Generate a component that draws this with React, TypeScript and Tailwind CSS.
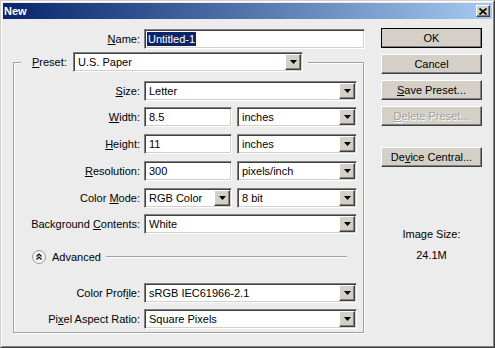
import React from "react";

const sunken =
  "bg-white border border-t-[#808080] border-l-[#808080] border-b-white border-r-white shadow-[inset_1px_1px_0_#404040,inset_-1px_-1px_0_#d4d0c8]";
const raised =
  "bg-[#d4d0c8] border border-t-white border-l-white border-b-[#404040] border-r-[#404040] shadow-[inset_-1px_-1px_0_#808080]";

type BoxProps = { value: React.ReactNode; className?: string };

const TextBox = ({ value, className = "" }: BoxProps) => (
  <div className={`${sunken} h-[20px] flex items-center pl-[4px] ${className}`}>{value}</div>
);

const Combo = ({ value, className = "" }: BoxProps) => (
  <div className={`${sunken} h-[20px] flex items-center pl-[4px] pr-[1px] ${className}`}>
    <span className="flex-1 whitespace-nowrap overflow-hidden">{value}</span>
    <div className={`${raised} w-[16px] h-[16px] flex items-center justify-center`}>
      <svg width="7" height="4" viewBox="0 0 7 4">
        <path d="M0 0h7L3.5 4z" fill="#000" />
      </svg>
    </div>
  </div>
);

type RowProps = { label: React.ReactNode; className?: string; children: React.ReactNode };

const Row = ({ label, className = "", children }: RowProps) => (
  <div className={`flex items-center h-[20px] ${className}`}>
    <div className="w-[126px] text-right whitespace-nowrap">{label}</div>
    <div className="ml-[4px] flex gap-[5px]">{children}</div>
  </div>
);

type BtnProps = { children: React.ReactNode; className?: string; isDefault?: boolean; disabled?: boolean };

const Btn = ({ children, className = "", isDefault, disabled }: BtnProps) => (
  <div
    className={`h-[20px] w-[101px] flex items-center justify-center ${
      isDefault ? "outline outline-1 outline-black -outline-offset-1" : ""
    } ${raised} ${disabled ? "text-[#a0a0a0] [text-shadow:1px_1px_0_#fff]" : ""} ${className}`}
  >
    {children}
  </div>
);

export default function App() {
  return (
    <div className="w-[495px] h-[348px] bg-[#ececec] font-['Liberation_Sans',Arial,sans-serif] text-[11px] leading-[13px] text-black border border-t-[#d4d0c8] border-l-[#d4d0c8] border-b-[#404040] border-r-[#404040]">
      <div className="h-full border border-t-white border-l-white border-b-[#808080] border-r-[#808080] p-[1px] flex flex-col">
        {/* title bar */}
        <div className="h-[16px] flex items-center justify-between bg-gradient-to-r from-[#0a246a] to-[#a6caf0] pl-[1px] pr-[2px]">
          <span className="text-white font-bold">New</span>
          <div className={`${raised} w-[14px] h-[12px] flex items-center justify-center`}>
            <svg width="8" height="7" viewBox="0 0 8 7">
              <path d="M0.5 0.5L7.5 6.5M7.5 0.5L0.5 6.5" stroke="#000" strokeWidth="1.6" />
            </svg>
          </div>
        </div>

        <div className="flex flex-1">
          {/* left side */}
          <div className="w-[378px] flex flex-col">
            <div className="flex items-center h-[20px] mt-[10px]">
              <div className="w-[137px] text-right">
                <u>N</u>ame:
              </div>
              <TextBox
                className="ml-[4px] w-[221px] !pl-[2px]"
                value={<span className="bg-[#0a246a] text-white px-[1px] leading-[14px]">Untitled-1</span>}
              />
            </div>

            <fieldset className="ml-[10px] mt-[3px] w-[351px] border border-[#a0a0a0] shadow-[inset_1px_1px_0_#fff,1px_1px_0_#fff] pb-[3px]">
              <legend className="ml-[7px] pl-[11px] pr-[5px] bg-[#ececec]">
                <div className="flex items-center h-[20px]">
                  <span className="w-[41px]">
                    <u>P</u>reset:
                  </span>
                  <Combo className="w-[230px]" value="U.S. Paper" />
                </div>
              </legend>

              <Row className="mt-[9px]" label={<><u>S</u>ize:</>}>
                <Combo className="w-[213px]" value="Letter" />
              </Row>
              <Row className="mt-[6px]" label={<><u>W</u>idth:</>}>
                <TextBox className="w-[88px]" value="8.5" />
                <Combo className="w-[120px]" value="inches" />
              </Row>
              <Row className="mt-[7px]" label={<><u>H</u>eight:</>}>
                <TextBox className="w-[88px]" value="11" />
                <Combo className="w-[120px]" value="inches" />
              </Row>
              <Row className="mt-[7px]" label={<><u>R</u>esolution:</>}>
                <TextBox className="w-[88px]" value="300" />
                <Combo className="w-[120px]" value="pixels/inch" />
              </Row>
              <Row className="mt-[7px]" label={<>Color <u>M</u>ode:</>}>
                <Combo className="w-[88px]" value="RGB Color" />
                <Combo className="w-[120px]" value="8 bit" />
              </Row>
              <Row className="mt-[6px]" label={<>Background <u>C</u>ontents:</>}>
                <Combo className="w-[213px]" value="White" />
              </Row>

              <div className="flex items-center h-[14px] mt-[16px]">
                <svg className="ml-[18px]" width="14" height="14" viewBox="0 0 14 14">
                  <circle cx="7" cy="7" r="6.5" fill="#f4f4f4" stroke="#9a9a9a" />
                  <path d="M4.5 6.5L7 4l2.5 2.5M4.5 9.5L7 7l2.5 2.5" fill="none" stroke="#000" strokeWidth="1.2" />
                </svg>
                <span className="ml-[6px]">Advanced</span>
                <div className="flex-1 ml-[5px] mr-[16px] border-t border-t-[#a0a0a0] border-b border-b-white" />
              </div>

              <Row className="mt-[19px]" label={<>Color Prof<u>i</u>le:</>}>
                <Combo className="w-[213px]" value="sRGB IEC61966-2.1" />
              </Row>
              <Row className="mt-[6px]" label={<>Pi<u>x</u>el Aspect Ratio:</>}>
                <Combo className="w-[213px]" value="Square Pixels" />
              </Row>
            </fieldset>
          </div>

          {/* right side */}
          <div className="w-[101px] flex flex-col items-center">
            <Btn className="mt-[9px]" isDefault>
              OK
            </Btn>
            <Btn className="mt-[6px]">Cancel</Btn>
            <Btn className="mt-[6px]">
              <span>
                <u>S</u>ave Preset...
              </span>
            </Btn>
            <Btn className="mt-[6px]" disabled>
              <span>
                <u>D</u>elete Preset...
              </span>
            </Btn>
            <Btn className="mt-[21px]">
              <span>
                De<u>v</u>ice Central...
              </span>
            </Btn>
            <div className="mt-[61px]">Image Size:</div>
            <div className="mt-[8px]">24.1M</div>
          </div>
        </div>
      </div>
    </div>
  );
}
